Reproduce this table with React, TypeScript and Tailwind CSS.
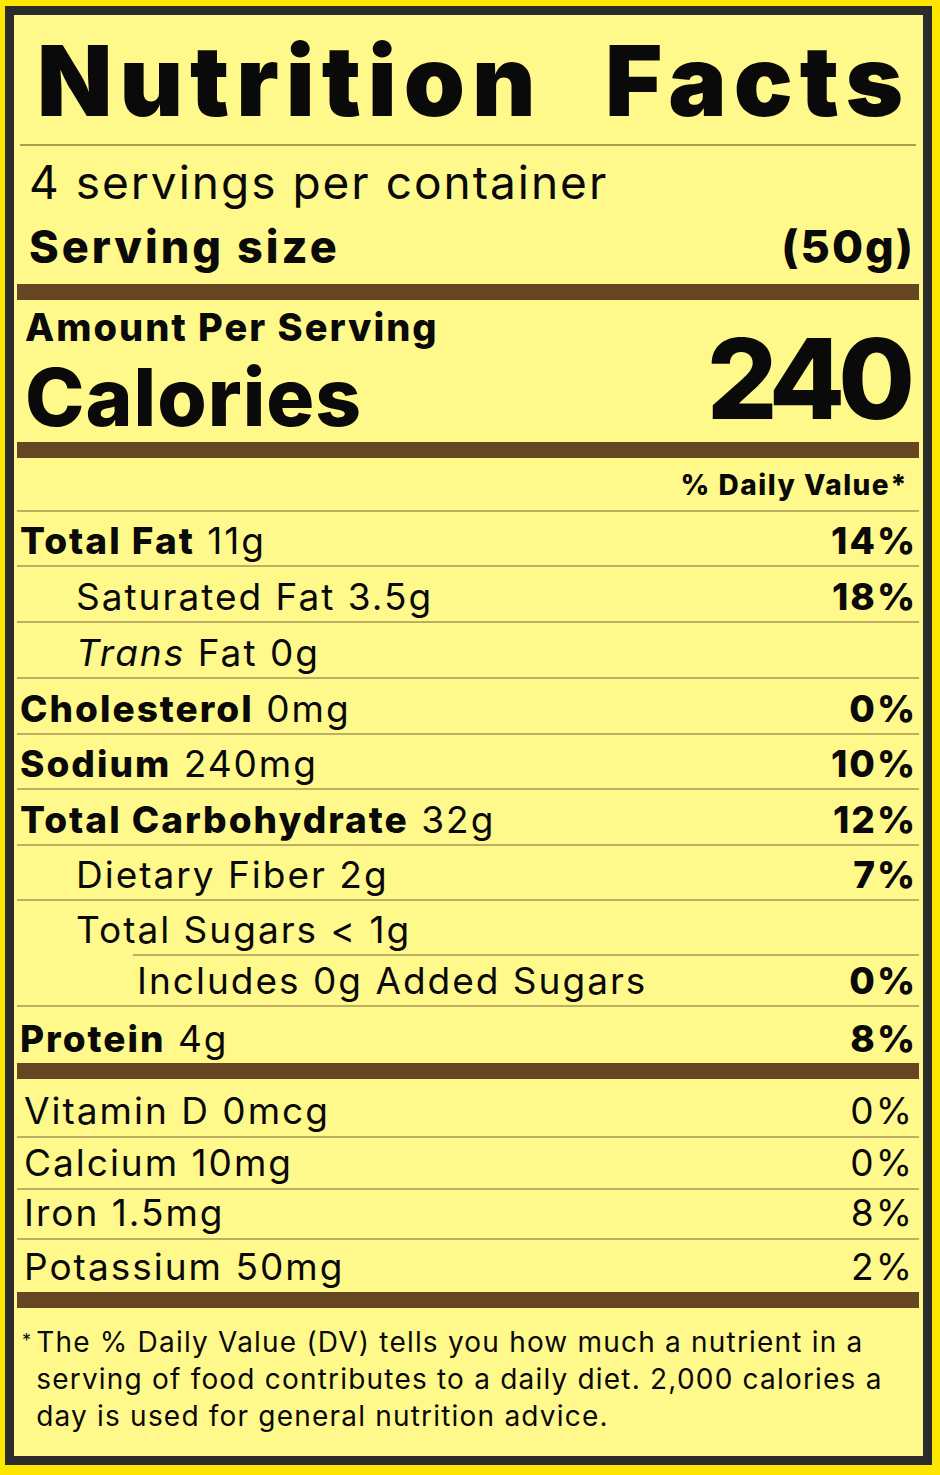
import React from 'react';

type Row = {
  name: string;
  bold?: boolean;
  italic?: string;
  amount?: string;
  pct?: string;
  indent: 0 | 1 | 2;
  h: string;
  line?: 'full' | 'indent' | 'none';
};

const rows: Row[] = [
  { name: 'Total Fat', bold: true, amount: '11g', pct: '14%', indent: 0, h: 'h-[53px]' },
  { name: 'Saturated Fat 3.5g', pct: '18%', indent: 1, h: 'h-[54px]' },
  { name: ' Fat 0g', italic: 'Trans', indent: 1, h: 'h-[54px]' },
  { name: 'Cholesterol', bold: true, amount: '0mg', pct: '0%', indent: 0, h: 'h-[54px]' },
  { name: 'Sodium', bold: true, amount: '240mg', pct: '10%', indent: 0, h: 'h-[53px]' },
  { name: 'Total Carbohydrate', bold: true, amount: '32g', pct: '12%', indent: 0, h: 'h-[54px]' },
  { name: 'Dietary Fiber 2g', pct: '7%', indent: 1, h: 'h-[53px]' },
  { name: 'Total Sugars < 1g', indent: 1, h: 'h-[53px]', line: 'indent' },
  { name: 'Includes 0g Added Sugars', pct: '0%', indent: 2, h: 'h-[49px]' },
  { name: 'Protein', bold: true, amount: '4g', pct: '8%', indent: 0, h: 'h-[56px]', line: 'none' },
];

const vitamins = [
  { name: 'Vitamin D 0mcg', pct: '0%', h: 'h-[57px]' },
  { name: 'Calcium 10mg', pct: '0%', h: 'h-[50px]' },
  { name: 'Iron 1.5mg', pct: '8%', h: 'h-[48px]' },
  { name: 'Potassium 50mg', pct: '2%', h: 'h-[52px]' },
];

const indents = ['pl-[3px]', 'pl-[59px]', 'pl-[120px]'];

function Bar() {
  return <div className="h-[16px] bg-[#654522]" />;
}

function Line({ inset }: { inset?: boolean }) {
  return <div className={inset ? 'h-[2px] bg-[#bcae62] ml-[116px]' : 'h-[2px] bg-[#bcae62]'} />;
}

export default function App() {
  return (
    <div className="w-[940px] h-[1475px] bg-[#ffe600] pl-[5px] pt-[6px] pr-[8px] pb-[10px] font-[Inter,'Liberation_Sans',sans-serif] text-[#0a0a0a]">
      <div className="h-full border-[9px] border-[#2b2b2b] bg-[#fff98c] pl-[3px] pr-[4px] flex flex-col">
        {/* heading */}
        <div className="h-[129px] pt-[16px] pl-[20px] pr-[9px] flex justify-between text-[98px] leading-[100px] font-black tracking-[7px]">
          <span>Nutrition</span>
          <span>Facts</span>
        </div>
        <div className="h-[2px] bg-[#a99b52] mx-[3px]" />

        <div className="h-[138px] pl-[12px] pr-[4px]">
          <div className="pt-[6px] h-[66px] text-[46px] leading-[60px] tracking-[2px]">4 servings per container</div>
          <div className="flex justify-between text-[45px] leading-[70px] font-extrabold tracking-[2px]">
            <span className="tracking-[3px]">Serving size</span>
            <span>(50g)</span>
          </div>
        </div>
        <Bar />

        <div className="h-[142px] pl-[8px] pr-[11px] flex justify-between">
          <div className="flex flex-col">
            <div className="pt-[2px] h-[52px] text-[38px] leading-[50px] font-extrabold tracking-[2px]">Amount Per Serving</div>
            <div className="text-[80px] leading-[90px] font-extrabold tracking-[1px]">Calories</div>
          </div>
          <div className="pt-[24px] text-[111px] leading-[110px] font-extrabold tracking-[-7px]">240</div>
        </div>
        <Bar />

        <div className="h-[52px] pr-[11px] flex justify-end items-end pb-[11px] text-[28px] leading-none font-extrabold tracking-[1.5px]">
          % Daily Value*
        </div>
        <Line />

        {rows.map((r) => (
          <div key={r.name} className="flex flex-col">
            <div className={`${r.h} ${indents[r.indent]} pr-[2px] pb-[6px] flex justify-between items-end text-[37px] leading-none tracking-[2px]`}>
              <span>
                {r.italic && <i>{r.italic}</i>}
                {r.bold ? <b className="font-extrabold">{r.name}</b> : r.name}
                {r.amount && <> {r.amount}</>}
              </span>
              {r.pct && <span className="font-extrabold">{r.pct}</span>}
            </div>
            {r.line === 'none' ? null : <Line inset={r.line === 'indent'} />}
          </div>
        ))}
        <Bar />

        {vitamins.map((v, i) => (
          <div key={v.name} className="flex flex-col">
            <div className={`${v.h} pl-[7px] pr-[5px] pb-[7px] flex justify-between items-end text-[37px] leading-none tracking-[2px]`}>
              <span>{v.name}</span>
              <span>{v.pct}</span>
            </div>
            {i < vitamins.length - 1 && <Line />}
          </div>
        ))}
        <Bar />

        <div className="flex pt-[16px] pl-[5px] text-[28px] leading-[37px] tracking-[1.2px]">
          <span className="text-[18px] leading-none pt-[8px] pr-[4px]">*</span>
          <p>
            The % Daily Value (DV) tells you how much a nutrient in a<br />
            serving of food contributes to a daily diet. 2,000 calories a<br />
            day is used for general nutrition advice.
          </p>
        </div>
      </div>
    </div>
  );
}
